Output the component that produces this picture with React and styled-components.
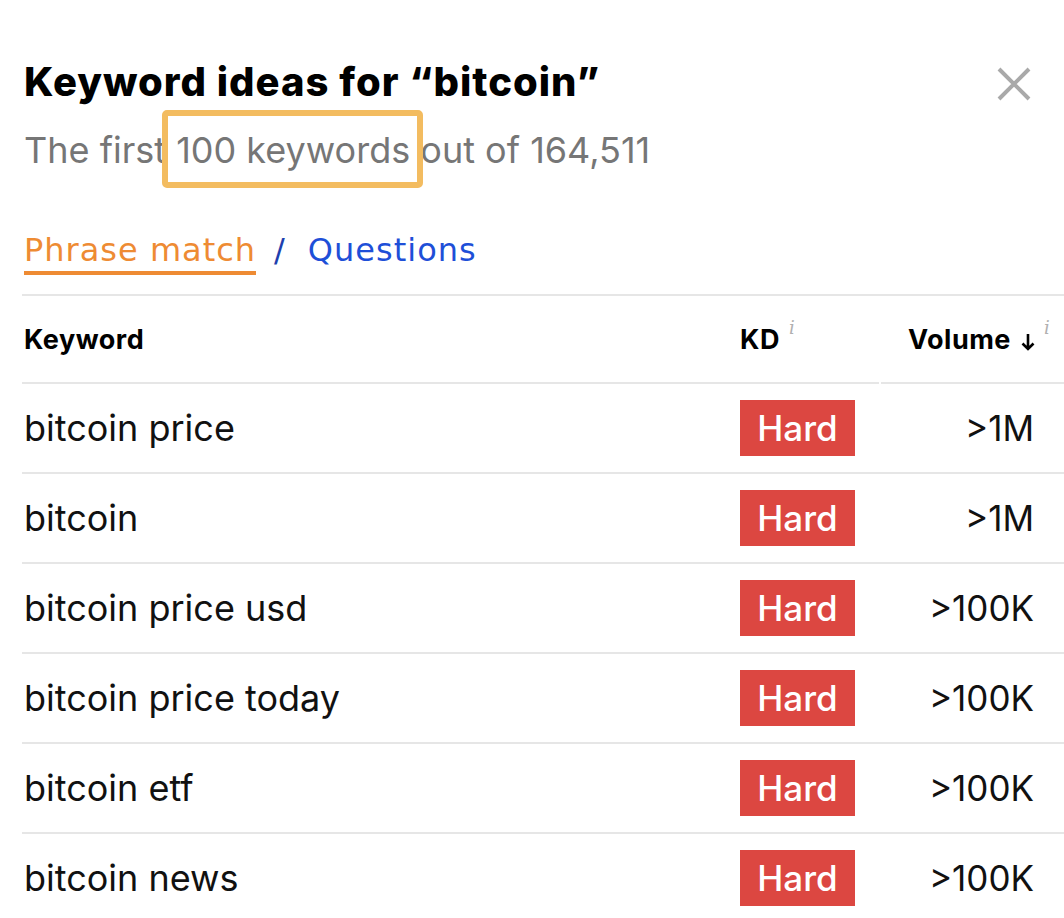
import React from "react";
import styled, { createGlobalStyle } from "styled-components";

const Global = createGlobalStyle`
  html, body { margin: 0; padding: 0; background: #fff; }
  body { font-family: Inter, "Noto Sans", sans-serif; overflow: hidden; }
`;

const Page = styled.div`
  width: 1064px;
  height: 918px;
  overflow: hidden;
  padding: 0 0 0 22px;
  box-sizing: border-box;
`;

const Header = styled.div`
  display: flex;
  justify-content: space-between;
  align-items: flex-start;
  padding: 58px 32px 0 2px;
`;

const Title = styled.h1`
  margin: 0;
  font-family: Inter, sans-serif;
  font-weight: 800;
  font-size: 40px;
  line-height: 48px;
  color: #000;
  letter-spacing: 1px;
`;

const CloseBtn = styled.button`
  border: 0;
  background: none;
  padding: 0;
  margin-top: 8px;
  width: 36px;
  height: 36px;
  display: flex;
  cursor: pointer;
`;

const Subtitle = styled.p`
  margin: 22px 0 0 2px;
  font-size: 36px;
  line-height: 44px;
  color: #767676;
  font-weight: 400;
`;

const Highlight = styled.span`
  position: relative;
  &::after {
    content: "";
    position: absolute;
    left: -14px;
    right: -13px;
    top: -18px;
    bottom: -16px;
    border: 6px solid #f3bc60;
    border-radius: 5px;
  }
`;

const Tabs = styled.div`
  display: flex;
  align-items: flex-start;
  margin: 58px 0 0 2px;
  font-family: "DejaVu Sans", Verdana, sans-serif;
  font-size: 32px;
  line-height: 40px;
  letter-spacing: 1px;
`;

const Tab = styled.span`
  color: ${(p) => (p.$active ? "#ee8b33" : "#1e4fd8")};
  padding-bottom: ${(p) => (p.$active ? "1px" : "0")};
  border-bottom: ${(p) => (p.$active ? "4px solid #ee8b33" : "none")};
`;

const Slash = styled.span`
  color: #1e3fae;
  margin: 0 22px 0 18px;
`;

const Table = styled.div`
  margin-top: 19px;
  border-top: 2px solid #e6e6e6;
  width: 1080px;
`;

const Row = styled.div`
  display: grid;
  grid-template-columns: 718px 141px 221px;
  height: ${(p) => (p.$head ? "86px" : "88px")};
  border-bottom: 2px solid #e6e6e6;
  align-items: center;
`;

const HeadCell = styled.div`
  font-family: Inter, sans-serif;
  font-weight: 700;
  font-size: 27px;
  letter-spacing: 0.5px;
  color: #000;
  display: flex;
  align-items: center;
  padding: ${(p) => p.$pad || "0 0 0 2px"};
  height: 100%;
  box-sizing: border-box;
  position: relative;
  ${(p) =>
    p.$sep &&
    `&::after{content:"";position:absolute;right:0;bottom:-2px;width:2px;height:2px;background:#fff;}`}
`;

const Info = styled.sup`
  font-family: "DejaVu Serif", serif;
  font-style: italic;
  font-weight: 400;
  font-size: 18px;
  color: #b0b0b0;
  margin-left: 9px;
  position: relative;
  top: -12px;
`;

const Arrow = styled.svg`
  margin-left: 10px;
  margin-top: 6px;
`;

const KeywordCell = styled.div`
  font-size: 36px;
  color: #111;
  padding-left: 2px;
`;

const KdCell = styled.div`
  display: flex;
`;

const Badge = styled.span`
  display: inline-flex;
  align-items: center;
  justify-content: center;
  width: 115px;
  height: 56px;
  background: #dc4741;
  color: #fff;
  font-size: 35px;
  font-weight: 500;
`;

const VolumeCell = styled.div`
  text-align: right;
  font-size: 35px;
  color: #111;
  padding-right: 68px;
`;

const rows = [
  ["bitcoin price", ">1M"],
  ["bitcoin", ">1M"],
  ["bitcoin price usd", ">100K"],
  ["bitcoin price today", ">100K"],
  ["bitcoin etf", ">100K"],
  ["bitcoin news", ">100K"],
];

export default function App() {
  return (
    <Page>
      <Global />
      <Header>
        <Title>Keyword ideas for “bitcoin”</Title>
        <CloseBtn aria-label="Close">
          <svg width="36" height="36" viewBox="0 0 36 36">
            <path d="M3 3 L33 33 M33 3 L3 33" stroke="#a9a9a9" strokeWidth="4" />
          </svg>
        </CloseBtn>
      </Header>
      <Subtitle>
        The first <Highlight>100 keywords</Highlight> out of 164,511
      </Subtitle>
      <Tabs>
        <Tab $active>Phrase match</Tab>
        <Slash>/</Slash>
        <Tab>Questions</Tab>
      </Tabs>
      <Table>
        <Row $head>
          <HeadCell>Keyword</HeadCell>
          <HeadCell $pad="0" $sep>
            KD<Info>i</Info>
          </HeadCell>
          <HeadCell $pad="0 0 0 27px">
            Volume
            <Arrow width="14" height="18" viewBox="0 0 14 18">
              <path d="M7 1 V16 M1.5 10.5 L7 16 L12.5 10.5" stroke="#000" strokeWidth="2.6" fill="none" />
            </Arrow>
            <Info>i</Info>
          </HeadCell>
        </Row>
        {rows.map(([k, v]) => (
          <Row key={k}>
            <KeywordCell>{k}</KeywordCell>
            <KdCell>
              <Badge>Hard</Badge>
            </KdCell>
            <VolumeCell>{v}</VolumeCell>
          </Row>
        ))}
      </Table>
    </Page>
  );
}
